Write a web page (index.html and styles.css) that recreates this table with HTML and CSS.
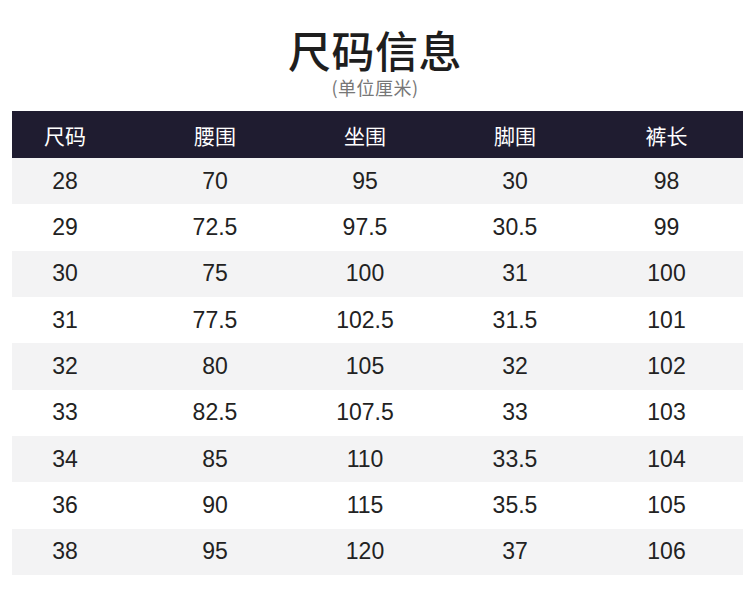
FILE: index.html
```html
<!DOCTYPE html>
<html lang="zh">
<head>
<meta charset="utf-8">
<link rel="stylesheet" href="styles.css">
</head>
<body>
<div class="page">
  <header class="heading">
    <h1 class="title">尺码信息</h1>
    <p class="subtitle">(单位厘米)</p>
  </header>
  <div class="table">
    <div class="row head">
      <div class="cell">尺码</div><div class="cell">腰围</div><div class="cell">坐围</div><div class="cell">脚围</div><div class="cell">裤长</div>
    </div>
    <div class="row"><div class="cell">28</div><div class="cell">70</div><div class="cell">95</div><div class="cell">30</div><div class="cell">98</div></div>
    <div class="row"><div class="cell">29</div><div class="cell">72.5</div><div class="cell">97.5</div><div class="cell">30.5</div><div class="cell">99</div></div>
    <div class="row"><div class="cell">30</div><div class="cell">75</div><div class="cell">100</div><div class="cell">31</div><div class="cell">100</div></div>
    <div class="row"><div class="cell">31</div><div class="cell">77.5</div><div class="cell">102.5</div><div class="cell">31.5</div><div class="cell">101</div></div>
    <div class="row"><div class="cell">32</div><div class="cell">80</div><div class="cell">105</div><div class="cell">32</div><div class="cell">102</div></div>
    <div class="row"><div class="cell">33</div><div class="cell">82.5</div><div class="cell">107.5</div><div class="cell">33</div><div class="cell">103</div></div>
    <div class="row"><div class="cell">34</div><div class="cell">85</div><div class="cell">110</div><div class="cell">33.5</div><div class="cell">104</div></div>
    <div class="row"><div class="cell">36</div><div class="cell">90</div><div class="cell">115</div><div class="cell">35.5</div><div class="cell">105</div></div>
    <div class="row"><div class="cell">38</div><div class="cell">95</div><div class="cell">120</div><div class="cell">37</div><div class="cell">106</div></div>
  </div>
</div>
</body>
</html>
```
FILE: styles.css
```css
html, body {
  margin: 0;
  padding: 0;
  background: #ffffff;
}
.page {
  width: 750px;
  height: 606px;
  overflow: hidden;
  font-family: "Liberation Sans", "Noto Sans CJK SC", sans-serif;
  color: #222222;
}
.heading {
  display: flex;
  flex-direction: column;
  align-items: center;
  padding-top: 25px;
}
.title {
  margin: 0;
  font-family: "Noto Sans CJK SC", sans-serif;
  font-weight: 500;
  font-size: 43px;
  line-height: 49px;
  letter-spacing: 0.5px;
  color: #1e1e1e;
}
.subtitle {
  margin: 3px 0 0;
  font-family: "Noto Sans CJK SC", sans-serif;
  font-weight: 400;
  font-size: 18px;
  line-height: 20px;
  letter-spacing: 0.5px;
  color: #777777;
}
.table {
  margin: 14px 7px 0 12px;
  display: flex;
  flex-direction: column;
}
.row {
  display: grid;
  grid-template-columns: 128px 150px 150px 150px 1fr;
  align-items: center;
  height: 46.33px;
  font-size: 23px;
}
.row:nth-child(even) {
  background: #f3f3f4;
}
.row.head {
  height: 47px;
  background: #1f1c30;
  color: #ffffff;
  font-family: "Noto Sans CJK SC", sans-serif;
  font-size: 21px;
}
.cell {
  text-align: center;
}
.cell:first-child {
  padding-right: 22px;
}
```
